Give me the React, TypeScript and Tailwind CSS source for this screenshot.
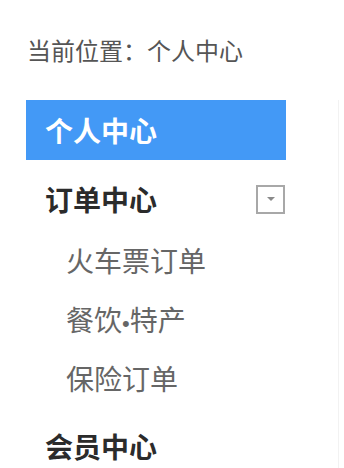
import React from "react";

const font = { fontFamily: '"Noto Sans CJK SC", "Noto Sans", sans-serif' };

export default function App() {
  return (
    <div className="w-[344px] h-[468px] bg-white overflow-hidden" style={font}>
      <div className="pt-[30px] pl-[27px] h-[70px] text-[24px] leading-[40px] text-[#555555]">
        当前位置：个人中心
      </div>
      <div className="mt-[30px] flex">
        <div className="ml-[26px] w-[260px] flex flex-col">
          <div className="h-[60px] bg-[#4399f6] pl-[19px] text-[28px] leading-[60px] font-bold text-white">
            个人中心
          </div>
          <div className="mt-[9px] h-[60px] pl-[19px] pr-[1px] flex items-center justify-between">
            <span className="text-[28px] leading-[60px] font-bold text-[#2b2b2b]">订单中心</span>
            <span className="w-[29px] h-[29px] border-2 border-[#a8a8a8] flex items-center justify-center">
              <svg width="10" height="6" viewBox="0 0 10 6">
                <path d="M1 1 L9 1 L5 5 Z" fill="#8a8a8a" />
              </svg>
            </span>
          </div>
          <div className="mt-[2px] flex flex-col">
            <div className="h-[59px] pl-[40px] text-[28px] leading-[59px] text-[#666666]">火车票订单</div>
            <div className="h-[59px] pl-[40px] text-[28px] leading-[59px] text-[#666666]">
              餐饮<span className="font-['Liberation_Sans',sans-serif] text-[22px]">•</span>特产
            </div>
            <div className="h-[59px] pl-[40px] text-[28px] leading-[59px] text-[#666666]">保险订单</div>
          </div>
          <div className="mt-[8px] h-[60px] pl-[19px] text-[28px] leading-[60px] font-bold text-[#2b2b2b]">
            会员中心
          </div>
        </div>
        <div className="ml-[52px] flex-1 border-l border-[#f2f2f2] h-[400px]" />
      </div>
    </div>
  );
}
